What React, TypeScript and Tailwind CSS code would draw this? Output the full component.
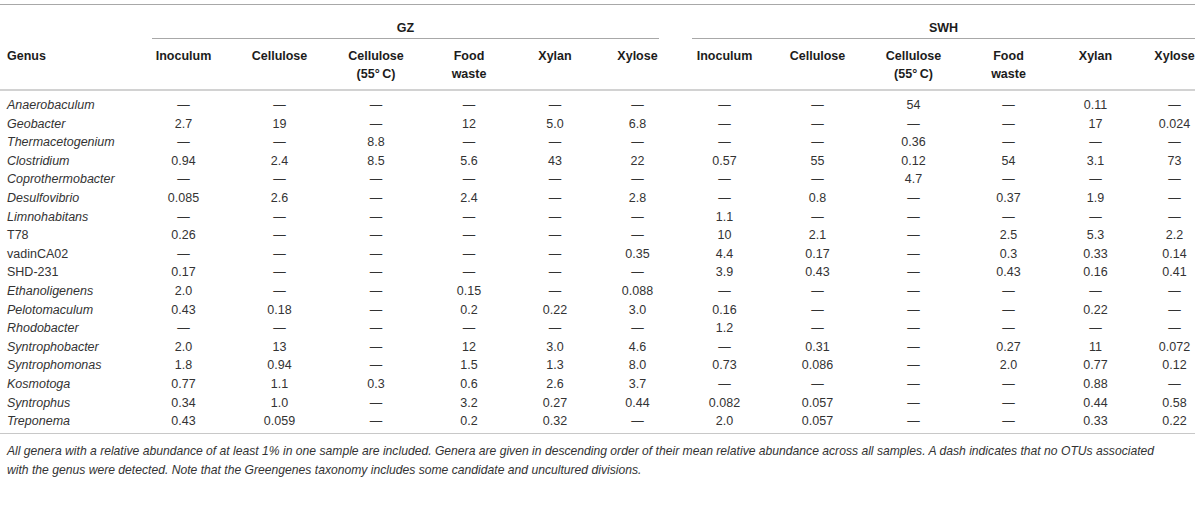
import React from "react";

const D = "—";
type Row = { name: string; italic: boolean; v: string[] };

const rows: Row[] = [
  { name: "Anaerobaculum", italic: true, v: [D, D, D, D, D, D, D, D, "54", D, "0.11", D] },
  { name: "Geobacter", italic: true, v: ["2.7", "19", D, "12", "5.0", "6.8", D, D, D, D, "17", "0.024"] },
  { name: "Thermacetogenium", italic: true, v: [D, D, "8.8", D, D, D, D, D, "0.36", D, D, D] },
  { name: "Clostridium", italic: true, v: ["0.94", "2.4", "8.5", "5.6", "43", "22", "0.57", "55", "0.12", "54", "3.1", "73"] },
  { name: "Coprothermobacter", italic: true, v: [D, D, D, D, D, D, D, D, "4.7", D, D, D] },
  { name: "Desulfovibrio", italic: true, v: ["0.085", "2.6", D, "2.4", D, "2.8", D, "0.8", D, "0.37", "1.9", D] },
  { name: "Limnohabitans", italic: true, v: [D, D, D, D, D, D, "1.1", D, D, D, D, D] },
  { name: "T78", italic: false, v: ["0.26", D, D, D, D, D, "10", "2.1", D, "2.5", "5.3", "2.2"] },
  { name: "vadinCA02", italic: false, v: [D, D, D, D, D, "0.35", "4.4", "0.17", D, "0.3", "0.33", "0.14"] },
  { name: "SHD-231", italic: false, v: ["0.17", D, D, D, D, D, "3.9", "0.43", D, "0.43", "0.16", "0.41"] },
  { name: "Ethanoligenens", italic: true, v: ["2.0", D, D, "0.15", D, "0.088", D, D, D, D, D, D] },
  { name: "Pelotomaculum", italic: true, v: ["0.43", "0.18", D, "0.2", "0.22", "3.0", "0.16", D, D, D, "0.22", D] },
  { name: "Rhodobacter", italic: true, v: [D, D, D, D, D, D, "1.2", D, D, D, D, D] },
  { name: "Syntrophobacter", italic: true, v: ["2.0", "13", D, "12", "3.0", "4.6", D, "0.31", D, "0.27", "11", "0.072"] },
  { name: "Syntrophomonas", italic: true, v: ["1.8", "0.94", D, "1.5", "1.3", "8.0", "0.73", "0.086", D, "2.0", "0.77", "0.12"] },
  { name: "Kosmotoga", italic: true, v: ["0.77", "1.1", "0.3", "0.6", "2.6", "3.7", D, D, D, D, "0.88", D] },
  { name: "Syntrophus", italic: true, v: ["0.34", "1.0", D, "3.2", "0.27", "0.44", "0.082", "0.057", D, D, "0.44", "0.58"] },
  { name: "Treponema", italic: true, v: ["0.43", "0.059", D, "0.2", "0.32", D, "2.0", "0.057", D, D, "0.33", "0.22"] },
];

const GRID =
  "grid grid-cols-[136px_95px_97px_96px_90px_82px_83px_91px_95px_97px_93px_81px_59px]";

const heads: string[][] = [
  ["Inoculum"],
  ["Cellulose"],
  ["Cellulose", "(55°\u2009C)"],
  ["Food", "waste"],
  ["Xylan"],
  ["Xylose"],
  ["Inoculum"],
  ["Cellulose"],
  ["Cellulose", "(55°\u2009C)"],
  ["Food", "waste"],
  ["Xylan"],
  ["Xylose"],
];

function Cell({ text, last }: { text: string; last: boolean }) {
  return <div className={last ? "text-center pl-[18px]" : "text-center"}>{text}</div>;
}

export default function App() {
  return (
    <div className="w-[1200px] h-[515px] bg-white overflow-hidden font-['Liberation_Sans',Arial,sans-serif] text-[12.5px]">
      <div className="w-[1195px] mt-[4px] border-t border-[#a8a8a8]">
        {/* group header */}
        <div className={GRID + " font-bold text-[#1c1c1c] leading-[18px]"}>
          <div />
          <div className="col-span-6 pt-[14px] pl-[16px] pr-[20px]">
            <div className="text-center border-b border-[#a8a8a8] pb-[1px]">GZ</div>
          </div>
          <div className="col-span-6 pt-[14px] pl-[13px]">
            <div className="text-center border-b border-[#a8a8a8] pb-[1px]">SWH</div>
          </div>
        </div>
        {/* column header */}
        <div className={GRID + " font-bold text-[#1c1c1c] leading-[18px] pt-[8px] pb-[6px] border-b-2 border-[#d2d2d2]"}>
          <div className="pl-[7px]">Genus</div>
          {heads.map((h, i) => (
            <div key={i} className={i === 11 ? "text-center pl-[18px]" : "text-center"}>
              {h.map((l, j) => (
                <div key={j} className="whitespace-nowrap">{l}</div>
              ))}
            </div>
          ))}
        </div>
        {/* body */}
        <div className="pt-[5px] pb-[2px] border-b border-[#c8c8c8] text-[#333333] leading-[18.6px]">
          {rows.map((r) => (
            <div key={r.name} className={GRID}>
              <div className={r.italic ? "italic pl-[7px] whitespace-nowrap" : "pl-[7px] whitespace-nowrap"}>{r.name}</div>
              {r.v.map((t, i) => (
                <Cell key={i} text={t} last={i === 11} />
              ))}
            </div>
          ))}
        </div>
        <p className="pt-[8px] pl-[7px] italic text-[#333333] text-[12.15px] leading-[19px] whitespace-nowrap">
          All genera with a relative abundance of at least 1% in one sample are included. Genera are given in descending order of their mean relative abundance across all samples. A dash indicates that no OTUs associated
          <br />
          with the genus were detected. Note that the Greengenes taxonomy includes some candidate and uncultured divisions.
        </p>
      </div>
    </div>
  );
}
